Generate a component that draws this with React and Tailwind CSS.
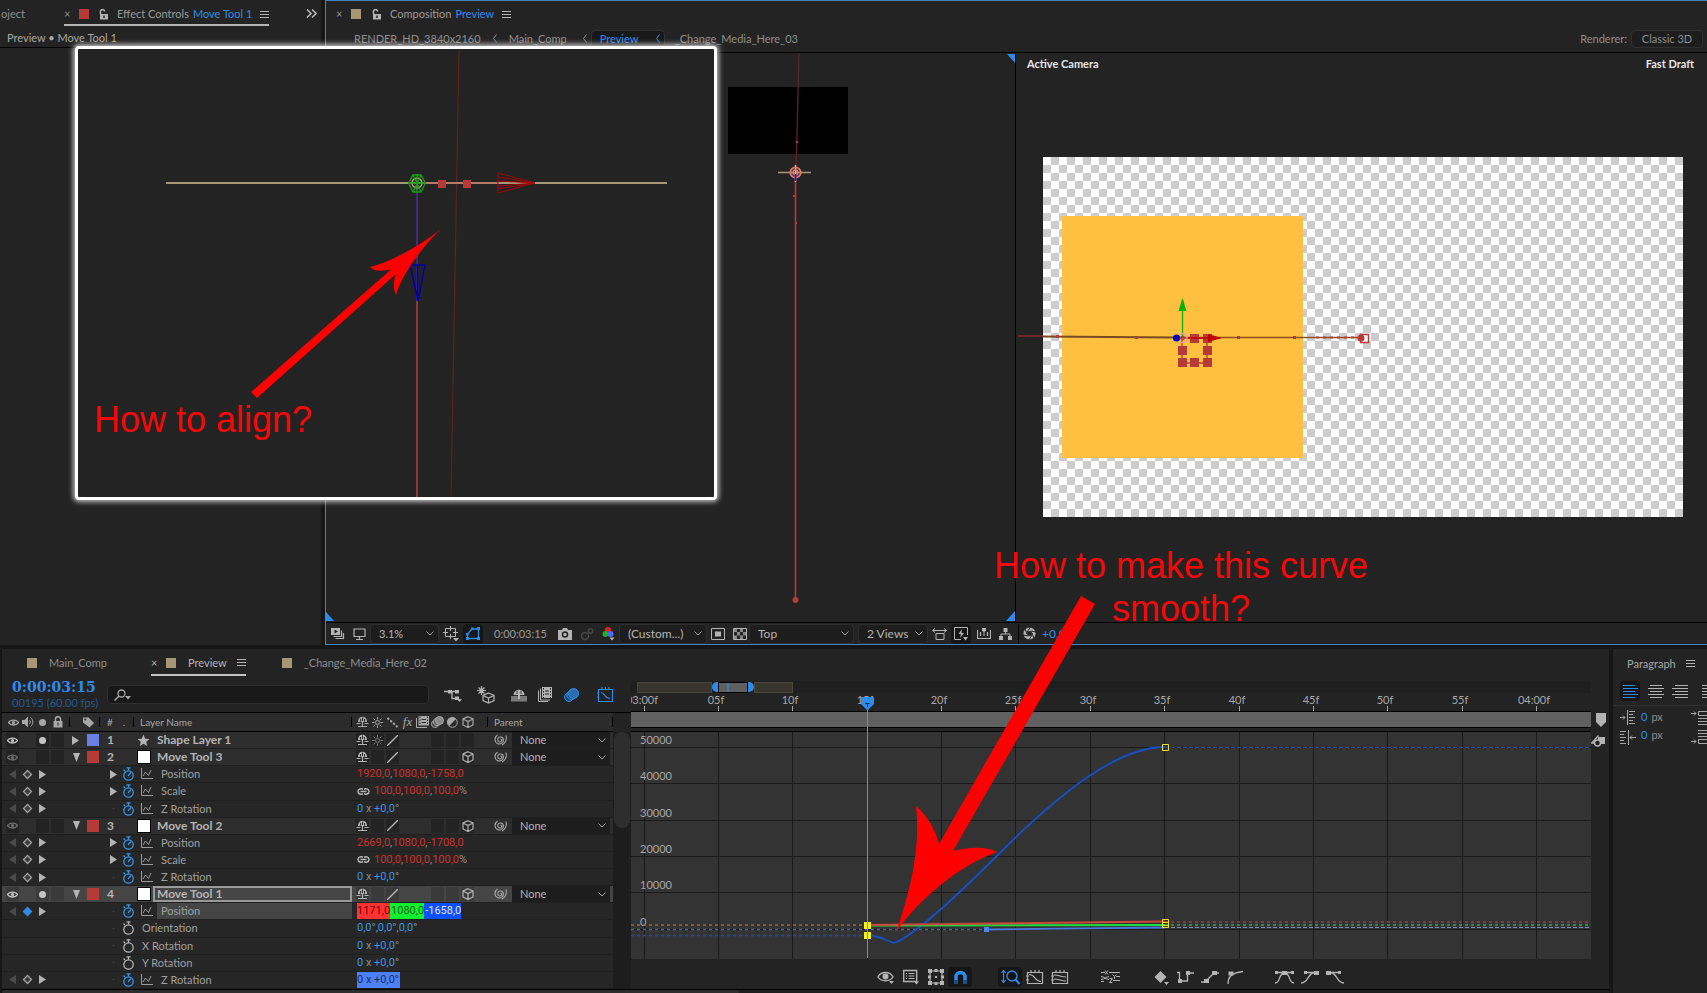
import React, { useState } from "react";

const layers = [
  { id: 1, name: "Shape Layer 1", color: "#6b7fe3", star: true, eye: true, solo: true, sun: true, props: [] },
  {
    id: 2, name: "Move Tool 3", color: "#b53a38", open: true, cube: true,
    props: [
      { label: "Position", kind: "vec", values: ["1920,0", "1080,0", "-1758,0"], keyed: true, arrow: true },
      { label: "Scale", kind: "scale", values: ["100,0", "100,0", "100,0"], keyed: true, arrow: true },
      { label: "Z Rotation", kind: "rot", keyed: true },
    ],
  },
  {
    id: 3, name: "Move Tool 2", color: "#b53a38", open: true, cube: true,
    props: [
      { label: "Position", kind: "vec", values: ["2669,0", "1080,0", "-1708,0"], keyed: true, arrow: true },
      { label: "Scale", kind: "scale", values: ["100,0", "100,0", "100,0"], keyed: true, arrow: true },
      { label: "Z Rotation", kind: "rot", keyed: true },
    ],
  },
  {
    id: 4, name: "Move Tool 1", color: "#b53a38", open: true, cube: true, eye: true, solo: true, selected: true,
    props: [
      { label: "Position", kind: "rgb", values: ["1171,0", "1080,0", "-1658,0"], keyed: true, active: true },
      { label: "Orientation", kind: "orient" },
      { label: "X Rotation", kind: "rot" },
      { label: "Y Rotation", kind: "rot" },
      { label: "Z Rotation", kind: "rot", keyed: true, marked: true },
    ],
  },
];

const frames = [
  ["03:00f", 13], ["05f", 87], ["10f", 161], ["15f", 236], ["20f", 310], ["25f", 384], ["30f", 459],
  ["35f", 533], ["40f", 608], ["45f", 682], ["50f", 756], ["55f", 831], ["04:00f", 905],
];

const gridRows = [["50000", 15], ["40000", 51], ["30000", 88], ["20000", 124], ["10000", 160], ["0", 197]];

/* ---------- icons ---------- */

function Svg({ w = 16, h = 16, className = "", children }) {
  return (
    <svg width={w} height={h} viewBox={`0 0 ${w} ${h}`} fill="none" stroke="currentColor" className={`block shrink-0 ${className}`} aria-hidden="true">
      {children}
    </svg>
  );
}

const LockOpen = () => (
  <Svg w={9} h={11} className="text-[#b4b4b4]">
    <path d="M1.500 5V2.500a2 2 0 0 1 4 0" strokeWidth="1.500" />
    <path d="M1 5h8v5.500H1z" fill="currentColor" stroke="none" />
    <path d="M5 6.500v2.500" stroke="#232323" strokeWidth="1.500" />
  </Svg>
);

const Lock = () => (
  <Svg w={10} h={12}>
    <path d="M2.500 5V3.200a2.500 2.500 0 0 1 5 0V5" strokeWidth="1.500" />
    <path d="M.5 5h9v6.500h-9z" fill="currentColor" stroke="none" />
    <path d="M5 6.500v3" stroke="#2b2b2b" />
  </Svg>
);

const MenuIcon = () => (
  <Svg w={9} h={9} className="text-[#b4b4b4]">
    <path d="M0 1.500h9M0 4.500h9M0 7.500h9" />
  </Svg>
);

const Chevron = () => (
  <Svg w={8} h={5} className="text-[#a0a0a0]">
    <path d="M.5.5 4 4 7.500.5" />
  </Svg>
);

const Eye = () => (
  <Svg w={11} h={9}>
    <path d="M.5 4.500C2.500 1.200 8.500 1.200 10.500 4.500 8.500 7.800 2.500 7.800.5 4.500z" strokeWidth="1.300" />
    <circle cx="5.500" cy="4.500" r="1.600" fill="currentColor" stroke="none" />
  </Svg>
);

const Speaker = () => (
  <Svg w={12} h={12}>
    <path d="M0 4h2.500L6 .5v11L2.500 8H0z" fill="currentColor" stroke="none" />
    <path d="M7.500 4c1 1 1 3 0 4M8.500 1.500c3 2 3 7 0 9" />
  </Svg>
);

const Tag = () => (
  <Svg w={12} h={12}>
    <path d="M1 1.500h5.500L12 7l-4.500 4.500L1 6.500z" fill="currentColor" stroke="none" />
    <circle cx="3.300" cy="3.600" r="1" fill="#2b2b2b" stroke="none" />
  </Svg>
);

const Shy = () => (
  <Svg w={13} h={12}>
    <path d="M2 6C2-1 11-1 11 6z" fill="currentColor" stroke="none" />
    <path d="M4.500 3v2.500M8.500 3v2.500M6.500 1.500V5" stroke="#232323" />
    <path d="M6.500 5.500v5M.5 7.500h4M8.500 7.500h4M2 10.500h9" strokeWidth="1.200" />
  </Svg>
);

const Sun = () => (
  <Svg w={11} h={11}>
    <circle cx="5.500" cy="5.500" r="2" />
    <path d="M5.500 0v2.500M5.500 8.500V11M0 5.500h2.500M8.500 5.500H11M1.600 1.600l1.600 1.600M7.800 7.800l1.600 1.600M1.600 9.400l1.600-1.600M7.800 3.200l1.600-1.600" />
  </Svg>
);

const Quality = () => (
  <Svg w={11} h={11}>
    <path d="M0 11 11 0" strokeWidth="1.400" />
  </Svg>
);

const Dots = () => (
  <Svg w={11} h={11}>
    <path d="m.5 1 10 9" strokeWidth="2" strokeDasharray="2.200 1.600" />
  </Svg>
);

const FilmSmall = () => (
  <Svg w={13} h={12}>
    <path d="M2.500 0H13v9.500H2.500z" fill="currentColor" stroke="none" />
    <path d="M4 .5v9M11.500.5v9" stroke="#2b2b2b" strokeDasharray="1.500 1.500" />
    <path d="M5.500 3.500H10M5.500 6.500H10" stroke="#2b2b2b" />
    <path d="M.5 2v9.500H11" />
  </Svg>
);

const Film = () => (
  <Svg w={14} h={15}>
    <path d="M4 0h10v11H4z" fill="currentColor" stroke="none" />
    <path d="M5.500 1v10M12.500 1v10" stroke="#232323" strokeDasharray="1.500 1.500" />
    <path d="M7 4h4M7 7h4" stroke="#232323" />
    <path d="M2.500 1.500V13H12M.5 3.500v11H10" />
  </Svg>
);

const Blur = () => (
  <Svg w={13} h={12}>
    <circle cx="4" cy="8" r="3.500" fill="#3a3a3a" />
    <circle cx="6" cy="6" r="3.700" fill="#5a5a5a" />
    <circle cx="8.500" cy="4.500" r="4" fill="#8a8a8a" />
  </Svg>
);

const BlurBlue = () => (
  <Svg w={15} h={14} className="text-[#2d8ceb]">
    <circle cx="5" cy="9" r="4.500" fill="#1d4a78" />
    <circle cx="7.500" cy="7" r="4.500" fill="#1d4a78" />
    <circle cx="9.500" cy="5.500" r="5" fill="#2a6db0" />
  </Svg>
);

const Adjust = () => (
  <Svg w={11} h={11}>
    <circle cx="5.500" cy="5.500" r="4.800" />
    <path d="M9 2A5 5 0 1 0 2 9z" fill="currentColor" stroke="none" />
  </Svg>
);

const Cube = () => (
  <Svg w={12} h={12}>
    <path d="M6 .7 11 3v6L6 11.500 1 9V3zM1 3l5 2.500L11 3M6 5.500v6" strokeWidth="1.200" />
  </Svg>
);

const Spiral = () => (
  <Svg w={13} h={12} className="text-[#a8a8a8]">
    <path d="M6.500 5.500c1-.8 1.800.5 1 1.500-1.200 1.500-4 .8-3.800-1.500C4 2.500 8.500 2 9.300 5c.8 3.500-3 6-6 4.500C0 7.800.5 3 3.500 1M12 1.500c.8 3.500-.5 7.500-4 9.500" strokeWidth="1.100" />
  </Svg>
);

const Link = () => (
  <Svg w={13} h={7}>
    <path d="M6 1.200C4.500.6 1 .6 1 3.500s3.500 2.900 5 2.300M7 1.200c1.500-.6 5-.6 5 2.300s-3.500 2.900-5 2.300M3.500 3.500h6" strokeWidth="1.500" />
  </Svg>
);

const Stopwatch = ({ on }) => (
  <Svg w={13} h={14} className={on ? "text-[#3a94e4]" : "text-[#b4b4b4]"}>
    <circle cx="6.500" cy="8.500" r="4.700" strokeWidth="1.300" />
    <path d="M4.500.8h4M6.500 1v2.500M1.500 2.500 3 4" strokeWidth="1.300" />
    {on && <path d="M6 9l3-3.500" strokeWidth="1.300" />}
  </Svg>
);

const MiniGraph = () => (
  <Svg w={12} h={12} className="text-[#9a9a9a]">
    <path d="M.5 0v10.500H12M2 8l2.500-4 3 3.500L10 2" />
  </Svg>
);

const TriRight = ({ dim, left }) => (
  <Svg w={7} h={9} className={dim ? "text-[#4a4a4a]" : "text-[#b4b4b4]"}>
    <path d={left ? "M7 0v9L0 4.500z" : "M0 0v9l7-4.500z"} fill="currentColor" stroke="none" />
  </Svg>
);

const TriDown = () => (
  <Svg w={9} h={9} className="text-[#b4b4b4]">
    <path d="M1 0h7L4.500 9z" fill="currentColor" stroke="none" />
  </Svg>
);

const Diamond = ({ on }) => (
  <Svg w={11} h={11} className={on ? "text-[#2d8ceb]" : "text-[#a0a0a0]"}>
    <path d="m5.500 1.500 4 4-4 4-4-4z" fill={on ? "currentColor" : "#3c3c3c"} strokeWidth="1.300" />
  </Svg>
);

const Crumb = () => (
  <Svg w={4} h={9}>
    <path d="M3.500.5.5 4.500l3 4" />
  </Svg>
);

const IconButton = ({ label, on, className = "", children }) => (
  <button
    type="button"
    aria-label={label}
    className={`flex h-5 shrink-0 items-center justify-center rounded-sm ${on ? "bg-[#161616] text-[#2d8ceb]" : "text-[#b4b4b4]"} ${className}`}
  >
    {children}
  </button>
);

const Select = ({ label, options, className = "" }) => (
  <div className={`relative flex shrink-0 items-center bg-[#1d1d1d] ${className}`}>
    <select aria-label={label} className="h-full w-full appearance-none bg-transparent pl-2 outline-none">
      {options.map((o) => (
        <option key={o}>{o}</option>
      ))}
    </select>
    <span className="pointer-events-none absolute right-1">
      <Chevron />
    </span>
  </div>
);

/* ---------- left panel ---------- */

function EffectControls() {
  return (
    <section className="w-[321px] shrink-0 bg-[#232323]">
      <div className="flex h-[26px] items-start pl-px">
        <a href="#project" className="h-[26px] w-[63px] pt-1.5 leading-4 text-[#8e8e8e]">oject</a>
        <div className="flex h-[26px] items-center border-b-2 border-[#b4b4b4] pt-1">
          <button type="button" aria-label="Close tab" className="w-[15px] text-left text-[#8e8e8e]">×</button>
          <span className="mr-2.5 size-2.5 bg-[#b53a38]" />
          <LockOpen />
          <span className="ml-[9px] text-[#9a9a9a]">Effect Controls</span>
          <span className="mr-2 ml-1 text-[#2d8ceb]">Move Tool 1</span>
          <MenuIcon />
        </div>
        <button type="button" aria-label="More tabs" className="mr-1 ml-auto h-[26px] text-[#b4b4b4]">
          <Svg w={11} h={9}>
            <path d="m1 .5 4 4-4 4M6 .5l4 4-4 4" strokeWidth="1.600" />
          </Svg>
        </button>
      </div>
      <div className="h-[22px] border-b border-black pt-1 pl-[7px] leading-4 text-[#a8a8a8]">Preview • Move Tool 1</div>
    </section>
  );
}

/* ---------- composition panel ---------- */

function TopView() {
  return (
    <div className="relative w-[690px] shrink-0 border-r border-black">
      <svg className="absolute inset-0 h-full w-full" fill="none">
        <path d="M402 34h120v67H402z" fill="#000" />
        <path d="m473 0-3 120" stroke="#5e2424" strokeWidth="1.300" />
        <path d="M469.500 120v427" stroke="#b53a38" strokeWidth="1.600" />
        <path d="M452 119.500h33" stroke="#a89776" strokeWidth="1.500" />
        <path d="M469.500 112v17" stroke="#e8b0a8" strokeWidth="1.500" />
        <circle cx="469.500" cy="119.500" r="5.200" stroke="#e07a70" strokeWidth="1.800" />
        <circle cx="469.500" cy="119.500" r="2.500" stroke="#e07a70" strokeWidth="1.500" />
        <path d="M469.500 121v7" stroke="#1414c8" strokeWidth="1.600" />
        <path d="M470 88h2v2h-2zM467 142h2v2h-2zM469 169h2v2h-2z" fill="#b53a38" />
        <circle cx="469.500" cy="547" r="3" fill="#b53a38" />
        <path d="M681 1h9v10zM0 559v9h8zM689 558v10h-9z" fill="#2d8ceb" />
      </svg>
    </div>
  );
}

function CameraView() {
  return (
    <div className="relative min-w-0 flex-1">
      <svg className="absolute inset-0 h-full w-full" fill="none">
        <defs>
          <pattern id="checker" x="27" y="104" width="16" height="16" patternUnits="userSpaceOnUse">
            <path d="M0 0h16v16H0z" fill="#fff" />
            <path d="M8 0h8v8H8zM0 8h8v8H0z" fill="#ccc" />
          </pattern>
        </defs>
        <path d="M27 104h640v360H27z" fill="url(#checker)" />
        <path d="M46 163h241v242H46z" fill="#ffc03f" />
        <path d="M2 283h25" stroke="#6e2828" strokeWidth="2" />
        <path d="M27 283.500 160 284.500" stroke="#7a4a22" strokeWidth="2" />
        <path d="M160 284.500h185" stroke="#8a5020" strokeWidth="1.300" />
        <path d="M300 284.500h45" stroke="#b53a38" strokeWidth="2" strokeDasharray="3 4" />
        <path d="M40 282h3v3h-3zM119 283h3v3h-3zM221 283h3v3h-3zM277 283h3v3h-3z" fill="#b53a38" />
        <path d="M344.500 281.500h8v8h-8z" fill="#fff" stroke="#b53a38" strokeWidth="1.500" />
        <circle cx="345" cy="285" r="3.500" fill="#b53a38" />
        <path d="M166.500 247v38" stroke="#00b400" strokeWidth="1.300" />
        <path d="m166.500 245 4 13h-8z" fill="#00b400" />
        <path d="M166 285h25v25h-25z" stroke="#b53a38" strokeWidth="1.300" />
        <path d="M174 281h9v9h-9zM187 281h9v9h-9zM162 293h9v9h-9zM187 293h9v9h-9zM162 305h9v9h-9zM174 305h9v9h-9zM187 305h9v9h-9z" fill="#b53a38" />
        <path d="M170 285h25" stroke="#c00000" strokeWidth="1.500" />
        <path d="m192 281 14 4-14 4z" fill="#c00000" />
        <circle cx="166.500" cy="285" r="4.500" stroke="#e8a0a0" strokeWidth="1.500" />
        <circle cx="166.500" cy="285" r="2" stroke="#b53a38" />
        <circle cx="160.500" cy="285" r="3.500" fill="#0000c0" />
      </svg>
      <div className="relative flex justify-between pt-[3px] pr-[13px] pl-[11px] leading-4 font-bold text-[#e6e6e6]">
        <span>Active Camera</span>
        <span>Fast Draft</span>
      </div>
    </div>
  );
}

function ViewerToolbar() {
  return (
    <div className="flex h-[22px] items-center border-t border-black bg-[#232323] text-[12px] text-[#b4b4b4]">
      <IconButton label="Always preview" className="ml-[5px]">
        <Svg w={14} h={12}>
          <path d="M0 0h9v7H0z" fill="currentColor" stroke="none" />
          <path d="m3.500 1.500 3.500 2-3.500 2z" fill="#232323" stroke="none" />
          <path d="M10.500 2.500v6H2.500M12.500 5v5.500h-8" strokeWidth="1.200" />
        </Svg>
      </IconButton>
      <IconButton label="Primary viewer" className="ml-2">
        <Svg w={13} h={12}>
          <path d="M1 1h11v7.500H1zM6.500 9v2M3 11.500h7" strokeWidth="1.200" />
        </Svg>
      </IconButton>
      <Select label="Magnification" options={["3.1%"]} className="ml-1 h-5 w-[69px] rounded-sm border border-[#2e2e2e] text-[11px]" />
      <IconButton label="Grid options" className="ml-1">
        <Svg w={16} h={16}>
          <path d="M2.500 2.500h10v8h-10zM7.500 0v5M7.500 8v5M0 6.500h5M10 6.500h5" />
          <path d="M10 12h6l-3 3.500z" fill="currentColor" stroke="none" />
        </Svg>
      </IconButton>
      <IconButton label="Toggle mask visibility" on className="ml-1 w-5">
        <Svg w={14} h={13}>
          <path d="M1.500 11.500V7L6 2h6.500v9.500z" strokeWidth="1.300" />
          <path d="M0 10h3v3H0zM11 10h3v3h-3zM11 0h3v3h-3zM5 .5h2.500V3H5zM0 6h2.500v2.500H0z" fill="currentColor" stroke="none" />
        </Svg>
      </IconButton>
      <button type="button" className="ml-[11px] w-[52px] text-left text-[11px] text-[#9a9a9a]">0:00:03:15</button>
      <IconButton label="Snapshot" className="ml-3">
        <Svg w={14} h={12}>
          <path d="M0 2h4l1-2h4l1 2h4v10H0z" fill="currentColor" stroke="none" />
          <circle cx="7" cy="6.500" r="2.500" stroke="#232323" strokeWidth="1.500" />
        </Svg>
      </IconButton>
      <IconButton label="Show snapshot" className="ml-2">
        <Svg w={14} h={14} className="text-[#484848]">
          <circle cx="5" cy="9" r="3.500" strokeWidth="1.500" />
          <circle cx="10.500" cy="4" r="2.200" strokeWidth="1.500" />
        </Svg>
      </IconButton>
      <IconButton label="Show channel" className="ml-2">
        <Svg w={13} h={15}>
          <circle cx="6" cy="4" r="3" fill="#e02020" stroke="none" />
          <circle cx="3.500" cy="8" r="3" fill="#20b020" stroke="none" />
          <circle cx="8.500" cy="8" r="3" fill="#4a6cf0" stroke="none" />
          <path d="M7.500 11.500h5L10 14.500z" fill="currentColor" stroke="none" />
        </Svg>
      </IconButton>
      <Select label="Resolution" options={["(Custom...)"]} className="ml-1 h-5 w-[88px] rounded-sm border border-[#2e2e2e]" />
      <IconButton label="Region of interest" className="ml-1">
        <Svg w={14} h={12}>
          <path d="M.5.5h13v11H.5z" />
          <path d="M4 3.500h6v5H4z" fill="currentColor" stroke="none" />
        </Svg>
      </IconButton>
      <IconButton label="Transparency grid" className="ml-2">
        <Svg w={14} h={12}>
          <path d="M.5.5h13v11H.5z" />
          <path d="M1 1h3v3H1zM7 1h3v3H7zM4 4h3v3.500H4zM10 4h3v3.500h-3zM1 7.500h3V11H1zM7 7.500h3V11H7z" fill="#8a8a8a" stroke="none" />
        </Svg>
      </IconButton>
      <Select label="3D view" options={["Top"]} className="ml-0.5 h-5 w-[105px] rounded-sm border border-[#2e2e2e]" />
      <Select label="View layout" options={["2 Views"]} className="ml-1 h-5 w-[70px] rounded-sm border border-[#2e2e2e]" />
      <IconButton label="Share view options" className="ml-1">
        <Svg w={15} h={12}>
          <path d="M1 2.500h13M3 .5l-2.500 2L3 4.500M12 .5l2.500 2-2.500 2M4 5.500h8v6H4z" />
        </Svg>
      </IconButton>
      <IconButton label="Fast previews" className="ml-1 w-5 bg-[#161616]">
        <Svg w={14} h={14}>
          <path d="M7 12.500H.5V.5h13V8" />
          <path d="M8 2 4.500 7H7l-1 4 4-5H7.500zM9 10h5l-2.500 3.500z" fill="currentColor" stroke="none" />
        </Svg>
      </IconButton>
      <IconButton label="Timeline" className="ml-1.5">
        <Svg w={14} h={11}>
          <path d="M.5 2v8.500h13V2M3.500 4v4M10.500 4v4" strokeWidth="1.200" />
          <path d="M7 3v5M5.500 0h3v3h-3z" fill="currentColor" strokeWidth="1" />
        </Svg>
      </IconButton>
      <IconButton label="Composition flowchart" className="ml-2">
        <Svg w={13} h={12}>
          <path d="M4.500 0h4v4h-4zM0 8h4v4H0zM9 8h4v4H9z" fill="currentColor" stroke="none" />
          <path d="M6.500 4v2M2 8V6h9v2" />
        </Svg>
      </IconButton>
      <span className="ml-1.5 h-5 w-px bg-black" />
      <IconButton label="Reset exposure" className="ml-1">
        <Svg w={13} h={13}>
          <circle cx="6.500" cy="6.500" r="4.300" strokeWidth="3.600" />
          <path d="M7.500 0 4 5M13 5 7.500 4M11 11.500 9 6M6 13l3-5M0 8l5.500 1M2 1.500l2 5.500" stroke="#232323" />
        </Svg>
      </IconButton>
      <button type="button" className="ml-1.5 text-[#2d8ceb]">+0,0</button>
    </div>
  );
}

function Composition() {
  return (
    <section className="flex min-w-0 flex-1 flex-col border border-r-0 border-[#4585bd] bg-[#232323]">
      <div className="flex h-[26px] items-center pl-2.5 text-[#9a9a9a]">
        <button type="button" aria-label="Close tab" className="w-[15px] text-left">×</button>
        <span className="mr-[11px] size-2.5 bg-[#a89776]" />
        <LockOpen />
        <span className="ml-[9px]">Composition</span>
        <span className="mr-2 ml-1 text-[#2d8ceb]">Preview</span>
        <MenuIcon />
      </div>
      <nav className="flex h-[26px] items-center border-b border-black pb-0.5 pl-7 text-[#8e8e8e]">
        <a href="#render">RENDER_HD_3840x2160</a>
        <span className="mx-3">
          <Crumb />
        </span>
        <a href="#main">Main_Comp</a>
        <span className="mr-1 ml-4">
          <Crumb />
        </span>
        <a href="#preview" className="flex h-[18px] w-[74px] items-center justify-between rounded border border-[#303030] bg-[#181818] pr-1 pl-2 text-[#2d8ceb]">
          Preview
          <Crumb />
        </a>
        <a href="#media" className="ml-2.5">_Change_Media_Here_03</a>
        <span className="mr-1 ml-auto">Renderer:</span>
        <button type="button" className="mr-1 h-[18px] w-[72px] rounded-sm border border-[#303030] bg-[#1d1d1d]">Classic 3D</button>
      </nav>
      <div className="flex min-h-0 flex-1">
        <TopView />
        <CameraView />
      </div>
      <ViewerToolbar />
    </section>
  );
}

/* ---------- timeline ---------- */

const Box = ({ className = "", children }) => (
  <span className={`flex h-[14px] w-[13px] shrink-0 items-center justify-center ${className}`}>{children}</span>
);

function LayerRow({ layer }) {
  const cell = layer.selected ? "border-b border-[#1f1f1f] bg-[#454545] p-0" : "border-b border-[#1f1f1f] bg-[#2d2d2d] p-0";
  const sw = layer.selected ? "bg-[#3a3a3a]" : "bg-[#232323]";
  return (
    <tr className="h-[17px] text-[12px] text-[#b4b4b4]">
      <td className={cell}>
        <div className="flex h-4 items-center pl-1">
          <Box className={`${sw} ${layer.eye ? "text-[#c4c4c4]" : "text-[#6e6e6e]"}`}>
            <Eye />
          </Box>
          <Box className={`ml-[17px] ${sw}`}>{layer.solo && <span className="size-[7px] rounded-full bg-[#c4c4c4]" />}</Box>
          <Box className={`ml-0.5 ${sw}`} />
          <button type="button" aria-label="Twirl layer" className="ml-2 w-[11px]">
            {layer.open ? <TriDown /> : <TriRight />}
          </button>
          <span className="ml-1 size-3" style={{ backgroundColor: layer.color }} />
        </div>
      </td>
      <td className={cell}>
        <div className="h-4 pl-[7px] leading-4 font-bold">{layer.id}</div>
      </td>
      <td className={cell}>
        <div className="flex h-4 items-center pl-[3px]">
          {layer.star ? (
            <span className="w-[14px]">
              <Svg w={13} h={13}>
                <path d="m6.500.5 1.700 4.200 4.300.3-3.300 2.800 1 4.200-3.700-2.300L2.800 12l1-4.200L.5 5l4.300-.3z" fill="currentColor" stroke="none" />
              </Svg>
            </span>
          ) : (
            <span className="h-[14px] w-[14px] border border-black bg-white" />
          )}
          <span
            className={
              layer.selected
                ? "ml-0.5 flex h-4 flex-1 items-center border-2 border-[#9a9a9a] pl-0.5 font-bold"
                : "pl-1.5 font-bold leading-4"
            }
          >
            {layer.name}
          </span>
        </div>
      </td>
      <td className={cell}>
        <div className="flex h-4 items-center gap-0.5 pl-1">
          <Box className={sw}><Shy /></Box>
          <Box className={`${sw} text-[#7a7a7a]`}>{layer.sun && <Sun />}</Box>
          <Box className={sw}><Quality /></Box>
          <Box />
          <Box />
          <Box className={sw} />
          <Box className={sw} />
          <Box className={sw}>{layer.cube && <Cube />}</Box>
        </div>
      </td>
      <td className={cell}>
        <div className="flex h-4 items-center pl-1.5 text-[11px]">
          <Spiral />
          <Select label={`Parent of ${layer.name}`} options={["None"]} className="ml-[5px] h-4 w-[98px]" />
        </div>
      </td>
    </tr>
  );
}

const blue = "text-[#3a94e4]";
const red = "text-[#c8322f]";

function Value({ prop }) {
  const v = prop.values;
  switch (prop.kind) {
    case "vec":
      return (
        <span>
          <span className={red}>{v[0]}</span>,<span className={red}>{v[1]}</span>,<span className={red}>{v[2]}</span>
        </span>
      );
    case "scale":
      return (
        <span className="flex items-center">
          <span className="mr-1 text-[#b4b4b4]">
            <Link />
          </span>
          <span>
            <span className={red}>{v[0]}</span>,<span className={red}>{v[1]}</span>,<span className={red}>{v[2]}</span>%
          </span>
        </span>
      );
    case "rgb":
      return (
        <span className="flex h-4 leading-4">
          <span className="bg-[#ff3333] text-[#7a0000]">{v[0]}</span>
          <span className="bg-[#10f030] pl-px text-[#0a6a14]">{v[1]}</span>
          <span className="bg-[#0a50ff] pl-px text-[#dfe8ff]">{v[2]}</span>
        </span>
      );
    case "orient":
      return (
        <span>
          <span className={blue}>0,0</span>°,<span className={blue}>0,0</span>°,<span className={blue}>0,0</span>°
        </span>
      );
    default:
      return prop.marked ? (
        <span className="inline-block h-4 bg-[#4d80f5] pr-px leading-4 text-[#16305e]">0 x +0,0°</span>
      ) : (
        <span>
          <span className={blue}>0</span> x <span className={blue}>+0,0</span>°
        </span>
      );
  }
}

function PropRow({ prop }) {
  const cell = "border-b border-[#1f1f1f] bg-[#262626] p-0";
  return (
    <tr className="h-[17px] text-[#a0a0a0]">
      <td className={cell}>
        {prop.keyed && (
          <div className="flex h-4 items-center pl-[7px]">
            <TriRight dim left />
            <span className="mx-1.5">
              <Diamond on={prop.active} />
            </span>
            <TriRight />
          </div>
        )}
      </td>
      <td className={cell}>
        <div className="flex h-4 items-center">
          <span className="flex w-[22px] shrink-0 justify-center pl-1">
            {prop.arrow ? <TriRight /> : <span className="size-px bg-[#4a4a4a]" />}
          </span>
          <Stopwatch on={prop.keyed} />
        </div>
      </td>
      <td className={cell}>
        <div className="flex h-4 items-center pl-[7px]">
          {prop.keyed && <MiniGraph />}
          <span className={prop.keyed ? `ml-1 h-4 flex-1 pl-1 leading-4 ${prop.active ? "bg-[#454545]" : ""}` : "pl-px leading-4"}>
            {prop.label}
          </span>
        </div>
      </td>
      <td className={cell} colSpan={2}>
        <div className="h-4 pl-[5px] font-['Roboto'] leading-4 whitespace-nowrap text-[#8e8e8e]">
          <Value prop={prop} />
        </div>
      </td>
    </tr>
  );
}

function LayerTable() {
  const head = "relative border-b border-black bg-[#2b2b2b] p-0 text-left font-normal";
  const sep = <span className="absolute top-1 right-0 h-2.5 w-px bg-black" />;
  return (
    <table className="w-[611px] shrink-0 table-fixed border-separate border-spacing-0">
      <colgroup>
        <col className="w-[98px]" />
        <col className="w-[34px]" />
        <col className="w-[218px]" />
        <col className="w-[136px]" />
        <col className="w-[125px]" />
      </colgroup>
      <thead>
        <tr className="h-[19px] text-[10px] text-[#a8a8a8]">
          <th className={head}>
            <div className="flex h-[18px] items-center pl-1.5">
              <Eye />
              <span className="ml-[3px]"><Speaker /></span>
              <span className="ml-[5px] size-[7px] rounded-full bg-current" />
              <span className="ml-[7px]"><Lock /></span>
              <span className="ml-1.5 h-2.5 w-px bg-black" />
              <span className="ml-3"><Tag /></span>
            </div>
            {sep}
          </th>
          <th className={head}><div className="flex gap-2.5 pl-[7px]"><span>#</span><span>.</span></div>{sep}</th>
          <th className={head}><div className="pl-1.5">Layer Name</div>{sep}</th>
          <th className={head}>
            <div className="flex items-center gap-0.5 pl-1">
              <Box><Shy /></Box>
              <Box><Sun /></Box>
              <Box><Dots /></Box>
              <Box><em className="font-['Liberation_Serif'] text-[13px] leading-3">fx</em></Box>
              <Box><FilmSmall /></Box>
              <Box><Blur /></Box>
              <Box><Adjust /></Box>
              <Box><Cube /></Box>
            </div>
            {sep}
          </th>
          <th className={head}><div className="pl-1.5">Parent</div>{sep}</th>
        </tr>
      </thead>
      <tbody>
        {layers.map((layer) => (
          <React.Fragment key={layer.id}>
            <LayerRow layer={layer} />
            {layer.props.map((p) => (
              <PropRow key={p.label} prop={p} />
            ))}
          </React.Fragment>
        ))}
      </tbody>
    </table>
  );
}

function TimelineTabs() {
  return (
    <div className="flex h-[31px] items-start pl-[25px] text-[#8e8e8e]">
      <a href="#main-comp" className="flex h-[27px] items-center">
        <span className="mr-3 size-2.5 bg-[#a89776]" />
        Main_Comp
      </a>
      <div className="ml-11 flex h-[27px] items-center border-b-2 border-[#c4c4c4] pt-0.5 text-[#b4b4b4]">
        <button type="button" aria-label="Close tab" className="w-[15px] text-left">×</button>
        <span className="mr-3 size-2.5 bg-[#a89776]" />
        Preview
        <span className="ml-2.5">
          <MenuIcon />
        </span>
      </div>
      <a href="#change-media" className="ml-9 flex h-[27px] items-center">
        <span className="mr-3 size-2.5 bg-[#a89776]" />
        _Change_Media_Here_02
      </a>
    </div>
  );
}

function TimelineControls() {
  const [query, setQuery] = useState("");
  return (
    <div className="flex h-[33px] items-center border-b border-black pb-[3px]">
      <div className="w-[105px] pl-2.5">
        <div className="font-['DejaVu_Serif'] text-[14px] leading-4 font-bold text-[#2d8ceb]">0:00:03:15</div>
        <div className="leading-4 text-[#23588f]">00195 (60.00 fps)</div>
      </div>
      <div className="flex h-[19px] w-[322px] items-center rounded-sm border border-[#2e2e2e] bg-[#181818] pl-1.5 text-[#a8a8a8]">
        <Svg w={18} h={12}>
          <circle cx="7.500" cy="4.500" r="3.500" strokeWidth="1.300" />
          <path d="M5 7 .5 11.500" strokeWidth="1.500" />
          <path d="M11 7h6l-3 3.500z" fill="currentColor" stroke="none" />
        </Svg>
        <input
          type="search"
          aria-label="Search layers"
          value={query}
          onChange={(e) => setQuery(e.target.value)}
          className="w-full bg-transparent outline-none"
        />
      </div>
      <div className="flex items-center pl-[15px]">
        <IconButton label="Mini-flowchart">
          <Svg w={18} h={14}>
            <path d="M0 3.500h8M8 3.500v7h3M8 3.500h3" strokeWidth="1.300" />
            <path d="M4 2h4v3.500H4zM11 2h4v3.500h-4zM11 8.500h4V12h-4zM13 11h5l-2.500 3z" fill="currentColor" stroke="none" />
          </Svg>
        </IconButton>
        <IconButton label="Draft 3D" className="ml-[15px]">
          <Svg w={18} h={18}>
            <path d="m11.500 7 5.500 2.500v5L11.500 17 6 14.500v-5zM6 9.500l5.500 2.500L17 9.500M11.500 12v5" strokeWidth="1.200" />
            <path d="M4.500 0v9M0 4.500h9M1.500 1.500l6 6M1.500 7.500l6-6" strokeWidth="1.200" />
          </Svg>
        </IconButton>
        <IconButton label="Hide shy layers" className="ml-4">
          <Svg w={16} h={14}>
            <path d="M0 8h16v5.500H0z" fill="#7a7a7a" stroke="none" />
            <path d="M2.500 7C3 0 13 0 13.500 7z" fill="currentColor" stroke="none" />
            <path d="M6 2.500v3.500M10 2.500v3.500" stroke="#232323" strokeWidth=".8" />
            <path d="M8 6v5" strokeWidth="2" />
          </Svg>
        </IconButton>
        <IconButton label="Frame blending" className="ml-[11px]">
          <Film />
        </IconButton>
        <IconButton label="Motion blur" className="ml-3">
          <BlurBlue />
        </IconButton>
        <IconButton label="Graph editor" className="ml-[18px]">
          <Svg w={17} h={15} className="text-[#2d8ceb]">
            <path d="M1.500 2.500h14v12h-14zM5 0v2M8.500 0v2M12 0v2M0 6h1M0 10h1M4 5.500c4 0 3 6 9 6" strokeWidth="1.200" />
          </Svg>
        </IconButton>
      </div>
    </div>
  );
}

function Ruler() {
  return (
    <div>
      <div className="flex h-3 items-center rounded-t bg-[#1f1f1f] pl-1.5">
        <span className="h-[11px] w-[75px] border border-[#4a463c] bg-[#38352e]" />
        <span className="h-2.5 w-1.5 rounded-l-full bg-[#2d8ceb]" />
        <span className="flex h-[11px] w-[30px] justify-center border border-black bg-[#606060] pr-2.5">
          <span className="h-full w-0.5 bg-[#3a78b8]" />
        </span>
        <span className="h-2.5 w-1.5 rounded-r-full bg-[#2d8ceb]" />
        <span className="h-[11px] w-[39px] border border-[#4a463c] bg-[#38352e]" />
      </div>
      <svg className="block h-[18px] w-full" fill="#a8a8a8">
        {frames.map(([label, x]) => (
          <g key={label}>
            <text x={x - 2} y="11" textAnchor="middle">{label}</text>
            <path d={`M${x} 13h1v5h-1z`} />
          </g>
        ))}
        <path d="M230 4h13v7l-6 6h-1l-6-6z" fill="#2d8ceb" />
        <path d="M234.500 10.500h4M236.500 10v4" stroke="#10304e" />
      </svg>
      <div className="h-[17px] border-y border-black bg-[#606060]" />
      <div className="h-1 border-b border-black" />
    </div>
  );
}

function Graph() {
  return (
    <svg className="block h-[227px] w-full bg-[#333]" fill="none">
      {gridRows.map(([label, y]) => (
        <rect key={label} x="0" y={y} width="100%" height="1" fill="#1a1a1a" />
      ))}
      {frames.map(([label, x]) => (
        <rect key={label} x={x} y="0" width="1" height="100%" fill="#1a1a1a" />
      ))}
      {gridRows.map(([label, y]) => (
        <text key={label} x="9" y={y - 3} fill="#a8a8a8">{label}</text>
      ))}
      <path d="M0 193h236" stroke="#8f6e3c" strokeWidth="1.500" strokeDasharray="3 3" />
      <path d="M0 197.500h355" stroke="#4a6494" strokeWidth="1.500" strokeDasharray="3 3" />
      <path d="M0 203.500h236" stroke="#2a4a96" strokeWidth="1.500" strokeDasharray="3 3" />
      <path d="M534 15.500h426" stroke="#234a9c" strokeWidth="1.200" strokeDasharray="4 2" />
      <path d="M534 190h426" stroke="#7a3c3c" strokeWidth="2" strokeDasharray="3 3" />
      <path d="M534 193h426" stroke="#2f8a48" strokeWidth="2" strokeDasharray="3 3" />
      <path d="M534 195.500h426" stroke="#7a8cc0" strokeWidth="1.200" strokeDasharray="4 2" />
      <path d="M236 203c10 0 18 5 27 8 22-8 67-51 121-105 44-42 101-91 150-91" stroke="#1650c8" strokeWidth="1.800" />
      <path d="m355 197.500 179-2" stroke="#4a78e0" strokeWidth="1.800" />
      <path d="m236 193.500 298-.5" stroke="#18e040" strokeWidth="2" />
      <path d="m236 193 298-3.500" stroke="#d0453c" strokeWidth="2" />
      <path d="M353 195h5v5h-5z" fill="#4a86f0" />
      <path d="M233 190h7v7h-7zM233 200h7v7h-7z" fill="#f5f020" />
      <path d="M531.500 12.500h6v6h-6zM531.500 187.500h6v6h-6zM531.500 190.500h6v5h-6z" stroke="#f0e030" />
    </svg>
  );
}

function GraphToolbar() {
  return (
    <div className="flex h-9 items-center pl-[246px]">
      <IconButton label="Choose visible properties">
        <Svg w={18} h={16}>
          <path d="M1 8c3-6 12-6 15 0-3 5-12 5-15 0z" strokeWidth="1.400" />
          <circle cx="8.500" cy="7.500" r="3" fill="currentColor" stroke="none" />
          <path d="M12 12h5l-2.500 3z" fill="currentColor" stroke="none" />
        </Svg>
      </IconButton>
      <IconButton label="Graph type" className="ml-2">
        <Svg w={17} h={16}>
          <path d="M.7 1.500h13v11H.7z" strokeWidth="1.400" />
          <path d="M3 4.500h1M3 7h1M3 9.500h1M5.500 4.500h6M5.500 7h6M5.500 9.500h6" />
          <path d="M11 12.500h5l-2.500 3z" fill="currentColor" stroke="none" />
        </Svg>
      </IconButton>
      <IconButton label="Transform box" className="ml-2">
        <Svg w={16} h={16}>
          <path d="M2 2h12v12H2z" strokeWidth="1.200" />
          <path d="M0 0h4v4H0zM6.500 0h3v3h-3zM12 0h4v4h-4zM0 6.500h3v3H0zM13 6.500h3v3h-3zM0 12h4v4H0zM6.500 13h3v3h-3zM12 12h4v4h-4zM7 7h2v2H7z" fill="currentColor" stroke="none" />
        </Svg>
      </IconButton>
      <IconButton label="Snap" on className="ml-1 w-6">
        <Svg w={15} h={15}>
          <path d="M3 14V7a4.500 4.500 0 0 1 9 0v7" strokeWidth="3.500" />
          <path d="M3 14v-4M12 14v-4" stroke="#1a4c80" strokeWidth="3.500" />
        </Svg>
      </IconButton>
      <IconButton label="Auto-zoom graph height" on className="ml-[26px] w-6">
        <Svg w={19} h={16}>
          <circle cx="11" cy="7" r="5" strokeWidth="1.400" />
          <path d="m14.500 10.500 4 4.500" strokeWidth="2" />
          <path d="M2.500 2v11M.5 4l2-2.500 2 2.500M.5 11l2 2.500 2-2.500" strokeWidth="1.200" />
        </Svg>
      </IconButton>
      <IconButton label="Fit selection" className="ml-1">
        <Svg w={18} h={16}>
          <path d="M1.500 3.500h15v11h-15zM5 1v3M9 1v3M13 1v3M0 7h3M0 11h3M3 5.500c7 0 5 7 12 7" strokeWidth="1.200" />
        </Svg>
      </IconButton>
      <IconButton label="Fit all" className="ml-[7px]">
        <Svg w={18} h={16}>
          <path d="M1.500 3.500h15v11h-15zM5 1v3M9 1v3M13 1v3M0 7h3M0 11h3M3 6c5 0 7 2 12 2M3 10c5 0 7 2 12 2" strokeWidth="1.200" />
        </Svg>
      </IconButton>
      <IconButton label="Separate dimensions" className="ml-8">
        <Svg w={19} h={14}>
          <path d="M0 2.500h4M8 2.500h11M0 9.500c4 0 5-3 8-3M0 6.500c3 0 5 3 8 3M0 11.500h3M15 6.500h4M12 10.500h7M4 .5l3 4M7 .5l-3 4M11.500 4.500l2 2 2-2M13.500 6.500v2.500M8.500 8.500h3l-3 4h3" />
        </Svg>
      </IconButton>
      <IconButton label="Edit keyframe" className="ml-[34px]">
        <Svg w={15} h={15}>
          <path d="m6.500 1 6 6-6 6-6-6z" fill="currentColor" stroke="none" />
          <path d="M10 12h5l-2.500 3z" fill="currentColor" stroke="none" />
        </Svg>
      </IconButton>
      <IconButton label="Hold" className="ml-2">
        <Svg w={17} h={14}>
          <path d="M0 2.500h2.500V11h8V3H17" strokeWidth="1.300" />
          <path d="M1 9h4v4H1zM9 1h4v4H9z" fill="currentColor" stroke="none" />
        </Svg>
      </IconButton>
      <IconButton label="Linear" className="ml-[7px]">
        <Svg w={18} h={14}>
          <path d="M0 12h4l9-9h5" strokeWidth="1.300" />
          <path d="M3 9h5v4H3zM11 1h5v4h-5z" fill="currentColor" stroke="none" />
        </Svg>
      </IconButton>
      <IconButton label="Auto bezier" className="ml-2">
        <Svg w={17} h={14}>
          <path d="M1 14C1 8 3 3 16 1.500" strokeWidth="1.300" />
          <path d="M1.500 1.500h5v4h-5z" fill="currentColor" stroke="none" />
        </Svg>
      </IconButton>
      <IconButton label="Easy ease" className="ml-[31px]">
        <Svg w={19} h={14}>
          <path d="M0 13C6 13 3 3 9.500 3S13 13 19 13M1 2.500h17" strokeWidth="1.300" />
          <path d="M7 1h5v4H7zM0 1h3v3H0zM16 1h3v3h-3z" fill="currentColor" stroke="none" />
        </Svg>
      </IconButton>
      <IconButton label="Easy ease in" className="ml-[7px]">
        <Svg w={18} h={14}>
          <path d="M0 13c8 0 6-10 14-10.500H4" strokeWidth="1.300" />
          <path d="M13 1h5v4h-5zM3 1h3v3H3z" fill="currentColor" stroke="none" />
        </Svg>
      </IconButton>
      <IconButton label="Easy ease out" className="ml-[7px]">
        <Svg w={18} h={14}>
          <path d="M18 13c-8 0-6-10-14-10.500h10" strokeWidth="1.300" />
          <path d="M0 1h5v4H0zM12 1h3v3h-3z" fill="currentColor" stroke="none" />
        </Svg>
      </IconButton>
    </div>
  );
}

function Timeline() {
  return (
    <section className="ml-0.5 flex min-w-0 flex-1 flex-col overflow-hidden bg-[#232323]">
      <TimelineTabs />
      <div className="flex min-h-0 flex-1">
        <div className="flex w-[629px] shrink-0 flex-col overflow-hidden">
          <TimelineControls />
          <div className="flex min-h-0 flex-1 overflow-hidden">
            <LayerTable />
            <div className="mt-[19px] flex-1 bg-[#1d1d1d] px-px">
              <div className="h-24 rounded-full bg-[#2d2d2d]" />
            </div>
          </div>
        </div>
        <div className="relative min-w-0 flex-1 overflow-hidden pt-px">
          <Ruler />
          <Graph />
          <span className="absolute top-[30px] left-[236px] h-[248px] w-px bg-[#4a9ae0]" />
          <GraphToolbar />
        </div>
        <div className="w-[18px] shrink-0 pt-[33px] pl-1 text-[#b4b4b4]">
          <Svg w={12} h={14}>
            <path d="M1 0h10v9l-5 5-5-5z" fill="currentColor" stroke="none" />
          </Svg>
          <Svg w={14} h={12} className="-ml-1 mt-2">
            <path d="M7 2h7v7H7z" fill="currentColor" stroke="none" />
            <path d="M7.500.5.700 8H5" strokeWidth="1.300" />
            <circle cx="6.500" cy="8" r="3" fill="#232323" strokeWidth="1.500" />
          </Svg>
        </div>
      </div>
      <div className="h-1 w-full shrink-0 border-t border-black bg-[#1d1d1d]">
        <div className="h-full w-[737px] rounded-full bg-[#2d2d2d]" />
      </div>
    </section>
  );
}

/* ---------- paragraph ---------- */

function Paragraph() {
  return (
    <section className="w-[94px] shrink-0 overflow-hidden bg-[#232323] text-[#a8a8a8]">
      <div className="flex h-[29px] items-center pl-3.5">
        <h2 className="mr-2.5">Paragraph</h2>
        <MenuIcon />
      </div>
      <div className="mt-[3px] flex items-center gap-1 border-b border-[#303030] pb-1 pl-[7px]">
        <IconButton label="Left align" on className="w-5">
          <Svg w={15} h={14}>
            <path d="M0 1.500h12M0 4.500h15M0 7.500h12M0 10.500h15M0 13.500h12" />
          </Svg>
        </IconButton>
        <IconButton label="Center" className="ml-0.5 w-5">
          <Svg w={16} h={14}>
            <path d="M2 1.500h12M0 4.500h16M2 7.500h12M0 10.500h16M2 13.500h12" />
          </Svg>
        </IconButton>
        <IconButton label="Right align" className="w-5">
          <Svg w={16} h={14}>
            <path d="M3 1.500h13M0 4.500h16M3 7.500h13M0 10.500h16M3 13.500h13" />
          </Svg>
        </IconButton>
        <IconButton label="Justify" className="ml-2 w-4">
          <Svg w={16} h={14}>
            <path d="M0 1.500h16M0 4.500h16M0 7.500h16M0 10.500h16M0 13.500h12" />
          </Svg>
        </IconButton>
      </div>
      <div className="mt-0.5 flex h-[18px] items-center pl-[7px]">
        <Svg w={16} h={15}>
          <path d="M0 7.500h5M3 5.500l2 2-2 2M7.500 0v15M9 1.500h6M9 4.500h4M9 7.500h6M9 10.500h4M9 13.500h6" />
        </Svg>
        <button type="button" className="ml-[5px] text-[#2d8ceb]">0</button>
        <span className="ml-1 text-[#8e8e8e]">px</span>
        <span className="ml-auto">
          <Svg w={16} h={15}>
            <path d="M0 3.500h5M3 1.500l2 2-2 2M7.500 1.500h9v4h-9zM7 8.500h9M7 11.500h9M7 14.500h9" />
          </Svg>
        </span>
      </div>
      <div className="flex h-[18px] items-center pl-[7px]">
        <Svg w={16} h={15} className="mt-1">
          <path d="M0 1.500h6M0 4.500h4M0 7.500h6M0 10.500h4M0 13.500h6M8.500 0v15M10 7.500h6M12 5.500l-2 2 2 2" />
        </Svg>
        <button type="button" className="ml-[5px] text-[#2d8ceb]">0</button>
        <span className="ml-1 text-[#8e8e8e]">px</span>
        <span className="mt-1 ml-auto">
          <Svg w={16} h={15}>
            <path d="M0 11.500h5M3 9.500l2 2-2 2M7.500 9.500h9v4h-9zM7 .5h9M7 3.500h9M7 6.500h9" />
          </Svg>
        </span>
      </div>
    </section>
  );
}

/* ---------- notes drawn over the panels ---------- */

function AlignNote() {
  return (
    <figure className="absolute top-[46px] left-[75px] h-[454px] w-[642px] rounded-sm border-[3px] border-white bg-[#232323] shadow-[0_0_5px_2px_rgba(255,255,255,0.7)]">
      <svg className="absolute inset-0 h-full w-full" fill="none">
        <path d="m381 0-8 448" stroke="#5a2222" strokeWidth="1.300" />
        <path d="M88 134h501" stroke="#a89776" strokeWidth="2" />
        <path d="M345 134h75" stroke="#b8705c" strokeWidth="1.500" />
        <path d="M360 131h8v8h-8zM385 131h8v8h-8z" fill="#b53a38" />
        <path d="m420 124 37 10-37 10zM420 128l37 6-37 6M420 132l37 2-37 3" stroke="#a00808" />
        <path d="M339 140v112" stroke="#4c2ca0" strokeWidth="1.500" />
        <path d="M332 216h15l-7 36zM339.500 216v36" stroke="#0000a0" strokeWidth="1.500" />
        <path d="M339 252v196" stroke="#b53a38" strokeWidth="1.600" />
        <circle cx="339" cy="134" r="5" stroke="#e0a0a0" strokeWidth="1.300" />
        <path d="m335 126h8l4.500 8-4.500 9h-8l-4.500-9zM335 126l8 17M343 126l-8 17M330.500 134h17M339 125v18" stroke="#12a012" strokeWidth="1.300" />
      </svg>
      <figcaption className="absolute top-[351px] left-4 text-[36px] leading-10 whitespace-nowrap text-[#f40808]">How to align?</figcaption>
    </figure>
  );
}

function Arrows() {
  return (
    <svg className="pointer-events-none absolute inset-0 h-full w-full" fill="#f00">
      <path d="M441 229c-20 16-50 33-71 38 4 5 14 4 21 2.500L251 392l6 6L396 274c-3 7-3 15 0 21 6-21 26-48 45-66z" />
      <path d="M896 932c14-40 25-84 20-126 11 9 20 25 23 38l142-248 14 8L953 851c15-4 33-5 44 1-40 14-80 50-101 80z" />
    </svg>
  );
}

export default function App() {
  return (
    <main className="relative flex h-screen flex-col overflow-hidden bg-[#161616] font-['Lato',sans-serif] text-[11px] leading-4">
      <div className="flex h-[645px] shrink-0 gap-1">
        <EffectControls />
        <Composition />
      </div>
      <div className="mt-1 flex min-h-0 flex-1 gap-1">
        <Timeline />
        <Paragraph />
      </div>
      <div className="pointer-events-none absolute inset-0 overflow-hidden font-['Liberation_Sans',sans-serif]">
        <AlignNote />
        <p className="absolute top-[544px] left-[993px] w-[376px] text-center text-[36px] leading-[43px] whitespace-nowrap text-[#f40808]">
          How to make this curve
          <br />
          smooth?
        </p>
        <Arrows />
      </div>
    </main>
  );
}
